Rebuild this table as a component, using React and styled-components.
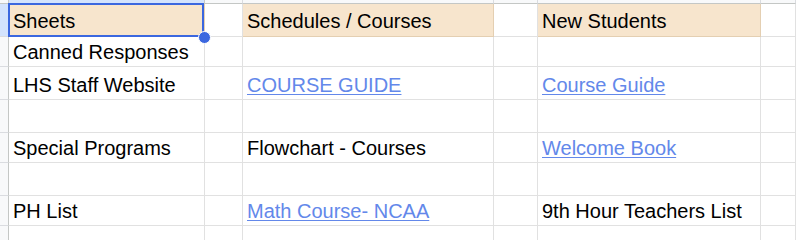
import React from 'react';
import styled, { createGlobalStyle } from 'styled-components';

const GlobalStyle = createGlobalStyle`
  html, body {
    margin: 0;
    padding: 0;
    background: #ffffff;
    overflow: hidden;
  }
  * {
    box-sizing: border-box;
  }
`;

const COLUMNS = [196, 38, 251, 44, 223];
const ROWS = [33, 30, 33, 33, 30, 33, 30, 30];

const rows = [
  [
    { text: 'Sheets', header: true, selected: true },
    null,
    { text: 'Schedules / Courses', header: true },
    null,
    { text: 'New Students', header: true },
  ],
  [{ text: 'Canned Responses' }, null, null, null, null],
  [
    { text: 'LHS Staff Website' },
    null,
    { text: 'COURSE GUIDE', link: true },
    null,
    { text: 'Course Guide', link: true },
  ],
  [null, null, null, null, null],
  [
    { text: 'Special Programs' },
    null,
    { text: 'Flowchart - Courses' },
    null,
    { text: 'Welcome Book', link: true },
  ],
  [null, null, null, null, null],
  [
    { text: 'PH List' },
    null,
    { text: 'Math Course- NCAA', link: true },
    null,
    { text: '9th Hour Teachers List' },
  ],
  [null, null, null, null, null],
];

const Sheet = styled.div`
  display: grid;
  grid-template-columns: 9px ${COLUMNS.map(w => `${w}px`).join(' ')} 1fr;
  grid-template-rows: 4px ${ROWS.map(h => `${h}px`).join(' ')};
  width: 796px;
  height: 240px;
  overflow: hidden;
  font-family: 'Liberation Sans', Arial, sans-serif;
  font-size: 20px;
  color: #000000;
`;

const Corner = styled.div`
  background: #f8f9fa;
  border-right: 1px solid #c4c7c5;
  border-bottom: 1px solid #c4c7c5;
`;

const ColHead = styled.div`
  background: ${props => (props.$active ? '#d3e3fd' : '#f8f9fa')};
  border-right: 1px solid ${props => (props.$active ? '#c4c7c5' : '#dadce0')};
  border-bottom: 1px solid #c4c7c5;
`;

const RowHead = styled.div`
  background: ${props => (props.$active ? '#d3e3fd' : '#f8f9fa')};
  border-right: 1px solid #c4c7c5;
  border-bottom: 1px solid #dadce0;
`;

const Cell = styled.div`
  position: relative;
  display: flex;
  align-items: flex-end;
  padding: 0 4px ${props => (props.$header ? '3px' : '2px')};
  line-height: 23px;
  white-space: nowrap;
  background: ${props => (props.$header ? '#f7e5cd' : '#ffffff')};
  border-right: 1px solid ${props => (props.$header ? '#e4cfb2' : '#e1e1e1')};
  border-bottom: 1px solid ${props => (props.$header ? '#e4cfb2' : '#e1e1e1')};
`;

const LinkText = styled.span`
  color: #6388ea;
  text-decoration: underline;
  text-decoration-thickness: 1px;
  text-underline-offset: 2px;
`;

const Selection = styled.div`
  position: absolute;
  left: -1px;
  top: -1px;
  right: 0;
  bottom: -1px;
  border: 2px solid #3b67df;
  pointer-events: none;
`;

const FillHandle = styled.div`
  position: absolute;
  right: -7px;
  bottom: -8px;
  width: 13px;
  height: 13px;
  border-radius: 50%;
  background: #3b67df;
  border: 1px solid #ffffff;
  z-index: 2;
`;

const App = () => (
  <>
    <GlobalStyle />
    <Sheet>
      <Corner />
      {COLUMNS.map((w, i) => (
        <ColHead key={`ch${i}`} $active={i === 0} />
      ))}
      <ColHead />
      {rows.map((row, r) => (
        <React.Fragment key={`r${r}`}>
          <RowHead $active={r === 0} />
          {row.map((cell, c) => (
            <Cell key={`c${r}-${c}`} $header={cell && cell.header}>
              {cell && (cell.link ? <LinkText>{cell.text}</LinkText> : cell.text)}
              {cell && cell.selected && (
                <>
                  <Selection />
                  <FillHandle />
                </>
              )}
            </Cell>
          ))}
          <Cell />
        </React.Fragment>
      ))}
    </Sheet>
  </>
);

export default App;
